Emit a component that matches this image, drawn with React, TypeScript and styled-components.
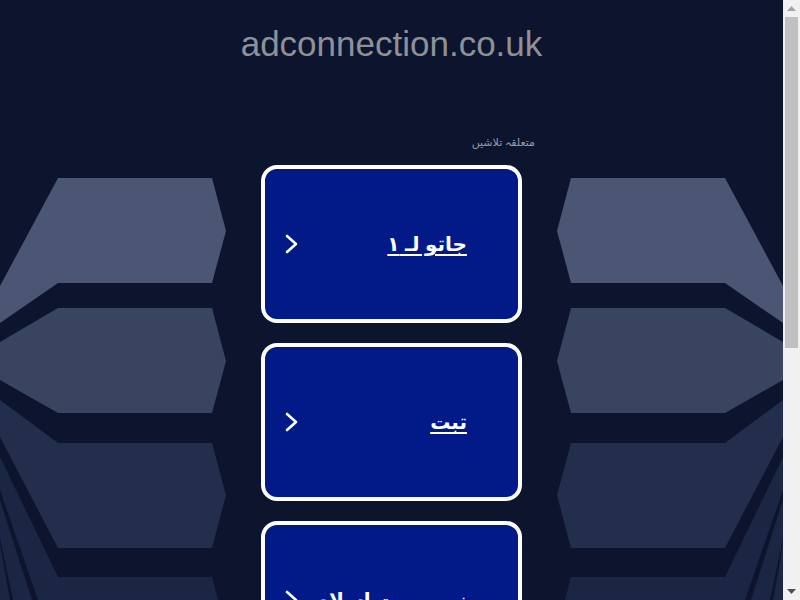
import React from "react";
import styled, { createGlobalStyle } from "styled-components";

const GlobalStyle = createGlobalStyle`
  html, body {
    margin: 0;
    padding: 0;
    background: #0d152e;
    overflow: hidden;
  }
  body {
    font-family: Arial, "Liberation Sans", "DejaVu Sans", sans-serif;
  }
`;

const Frame = styled.div`
  display: flex;
  flex-direction: row;
  height: 100vh;
  overflow: hidden;
`;

const Viewport = styled.div`
  flex: 1;
  min-width: 0;
  height: 100%;
  overflow: hidden;
  background: #0d152e;
`;

const ScrollBar = styled.div`
  width: 17px;
  flex-shrink: 0;
  height: 100%;
  display: flex;
  flex-direction: column;
  background: #f1f1f1;
`;

const ScrollButton = styled.div`
  height: 17px;
  display: flex;
  align-items: center;
  justify-content: center;
  flex-shrink: 0;
`;

const Track = styled.div`
  flex: 1;
  display: flex;
  flex-direction: column;
  padding: 0 2px;
`;

const Thumb = styled.div`
  height: 331px;
  background: #c1c1c1;
`;

const Arrow = styled.svg`
  width: 9px;
  height: 5px;
  display: block;
`;

const Page = styled.div`
  padding-bottom: 30px;
`;

const Title = styled.h1`
  margin: 0;
  padding-top: 24px;
  text-align: center;
  font-family: Arial, "Liberation Sans", sans-serif;
  font-weight: normal;
  font-size: 35px;
  line-height: 40px;
  color: #8e9198;
`;

const LabelRow = styled.div`
  width: 287px;
  margin: 71px auto 0;
  direction: rtl;
  text-align: right;
  font-size: 11px;
  line-height: 14px;
  color: #9a9ca3;
`;

const Main = styled.div`
  display: grid;
  grid-template-columns: 1fr 261px 1fr;
  margin-top: 16px;
`;

const DecorCell = styled.div<{ $side: "left" | "right" }>`
  display: flex;
  justify-content: ${(p) => (p.$side === "left" ? "flex-start" : "flex-end")};
  padding-top: 13px;
  overflow: hidden;
`;

const DecorSvg = styled.svg<{ $mirror?: boolean }>`
  display: block;
  width: 261px;
  height: 560px;
  flex-shrink: 0;
  transform: ${(p) => (p.$mirror ? "scaleX(-1)" : "none")};
`;

const CardList = styled.div`
  display: flex;
  flex-direction: column;
  gap: 20px;
`;

const Card = styled.a`
  box-sizing: border-box;
  height: 158px;
  display: flex;
  flex-direction: row;
  align-items: center;
  justify-content: space-between;
  padding: 0 51px 0 20px;
  background: #021a88;
  border: 4px solid #ffffff;
  border-radius: 16px;
  text-decoration: none;
  direction: ltr;
`;

const Chevron = styled.svg`
  width: 14px;
  height: 20px;
  flex-shrink: 0;
`;

const CardText = styled.span`
  direction: rtl;
  color: #ffffff;
  font-family: Arial, "DejaVu Sans", sans-serif;
  font-weight: bold;
  font-size: 20px;
  text-decoration: underline;
  text-underline-offset: 3px;
  white-space: nowrap;
`;

const C_A = "#4b5674";
const C_B = "#384460";
const C_C = "#232e4c";
const C_D = "#1b2544";
const C_BG = "#0d152e";

function Decor({ mirror }: { mirror?: boolean }) {
  return (
    <DecorSvg $mirror={mirror} viewBox="0 0 261 560" aria-hidden="true">
      <polygon fill={C_A} points="58,0 212,0 226,53 212,105 58,105 0,145 0,108" />
      <polygon fill={C_B} points="58,130 212,130 226,183 212,235 58,235 0,202 0,164" />
      <polygon fill={C_C} points="58,265 212,265 226,317 212,370 58,370 0,259 0,222" />
      <polygon fill={C_D} points="58,399 212,399 226,452 212,504 58,504 0,504 0,279" />
      <polygon fill={C_D} points="58,534 212,534 226,560 0,560 0,504" />
      <polygon fill={C_BG} points="0,312 0,322 32,422 48,470 55,470 38,422" />
      <polygon fill={C_BG} points="0,360 0,366 10,422 20,470 24,470 13,422" />
    </DecorSvg>
  );
}

const ChevronIcon = () => (
  <Chevron viewBox="0 0 14 20" aria-hidden="true">
    <polyline
      points="2,2 11,10 2,18"
      fill="none"
      stroke="#ffffff"
      strokeWidth="2.6"
      strokeLinecap="round"
      strokeLinejoin="round"
    />
  </Chevron>
);

const items = ["جاتو لـ ١", "تبت", "نصب بیت اسلام", "نیٹ ورک", "سیکیورٹی"];

export default function App() {
  return (
    <>
      <GlobalStyle />
      <Frame>
        <Viewport>
          <Page>
            <Title>adconnection.co.uk</Title>
            <LabelRow>متعلقہ تلاشیں</LabelRow>
            <Main>
              <DecorCell $side="left">
                <Decor />
              </DecorCell>
              <CardList>
                {items.map((t) => (
                  <Card key={t} href="#">
                    <ChevronIcon />
                    <CardText>{t}</CardText>
                  </Card>
                ))}
              </CardList>
              <DecorCell $side="right">
                <Decor mirror />
              </DecorCell>
            </Main>
          </Page>
        </Viewport>
        <ScrollBar>
          <ScrollButton>
            <Arrow viewBox="0 0 9 5">
              <polygon points="0,5 4.5,0 9,5" fill="#a3a3a3" />
            </Arrow>
          </ScrollButton>
          <Track>
            <Thumb />
          </Track>
          <ScrollButton>
            <Arrow viewBox="0 0 9 5">
              <polygon points="0,0 9,0 4.5,5" fill="#505050" />
            </Arrow>
          </ScrollButton>
        </ScrollBar>
      </Frame>
    </>
  );
}
